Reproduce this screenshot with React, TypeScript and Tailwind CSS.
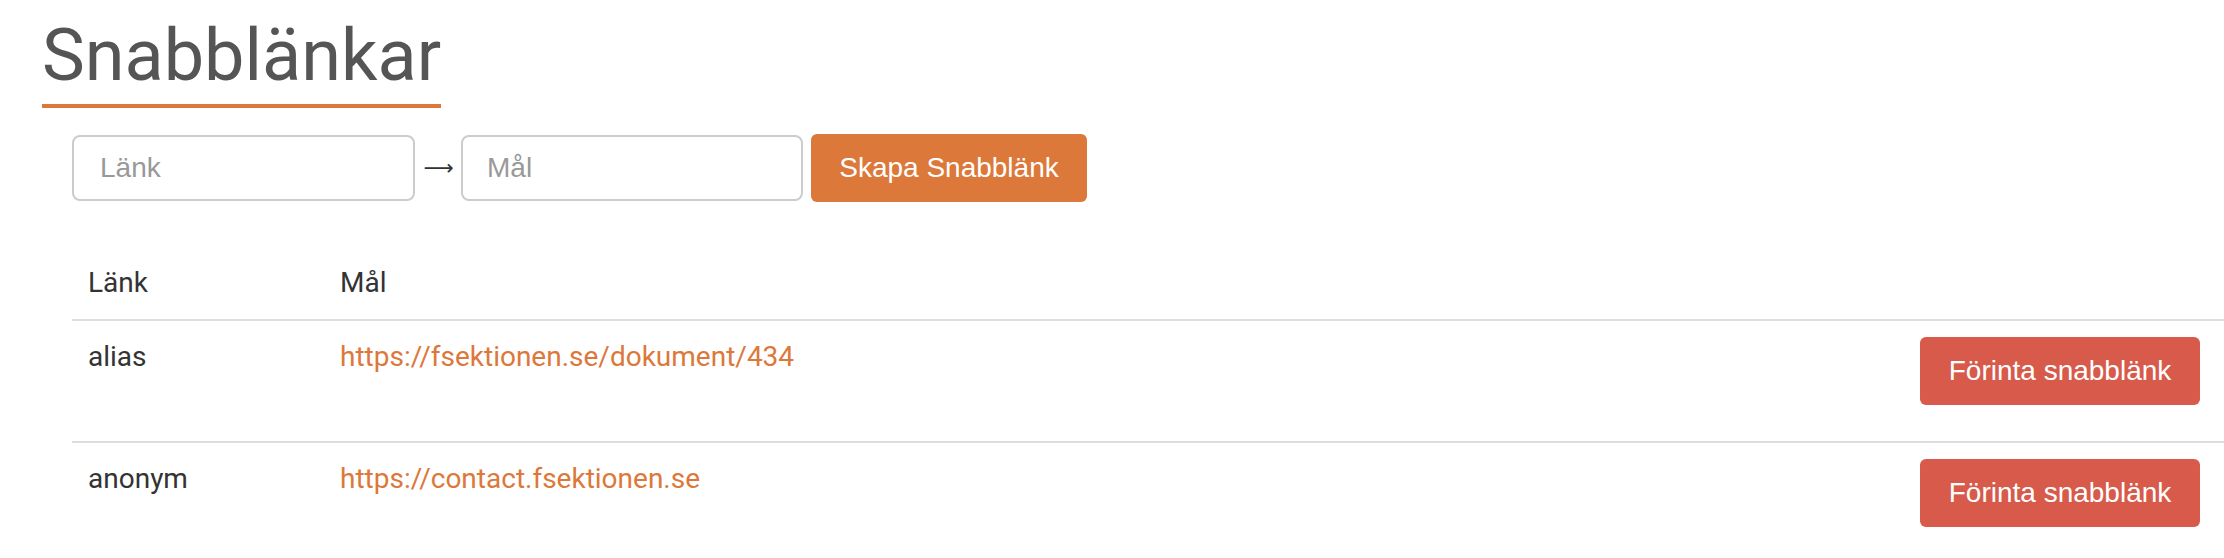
import React from "react";

const roboto = { fontFamily: "Roboto, 'Liberation Sans', sans-serif" };

export default function App() {
  const rows = [
    { alias: "alias", target: "https://fsektionen.se/dokument/434" },
    { alias: "anonym", target: "https://contact.fsektionen.se" },
  ];
  return (
    <div className="pl-[42px] pt-[16px] bg-white min-h-[558px] overflow-hidden">
      <h1
        className="inline-block text-[72px] leading-[79px] font-normal text-[#555555] pb-[9px] border-b-4 border-[#dc783a] font-['Roboto',sans-serif]"
      >
        Snabblänkar
      </h1>
      <div className="ml-[30px] mt-[26px] flex items-center font-['Liberation_Sans',Arial,sans-serif]">
        <input
          placeholder="Länk"
          className="w-[343px] h-[66px] border-2 border-[#cccccc] rounded-[8px] px-[26px] text-[28px] text-[#555] placeholder:text-[#999999] outline-none"
        />
        <span className="ml-[10px] mr-[9px] w-[27px] flex justify-center overflow-visible text-[21px] text-[#333] leading-none whitespace-nowrap font-['DejaVu_Sans',sans-serif]">
          ⟶
        </span>
        <input
          placeholder="Mål"
          className="w-[342px] h-[66px] border-2 border-[#cccccc] rounded-[8px] px-[24px] text-[28px] text-[#555] placeholder:text-[#999999] outline-none"
        />
        <button className="ml-[8px] h-[68px] w-[276px] bg-[#dc783a] rounded-[6px] text-white text-[28px] leading-[40px]">
          Skapa Snabblänk
        </button>
      </div>
      <div className="ml-[30px] mt-[45px]">
        <table className="w-full border-collapse text-[28px] leading-[40px] text-[#333333]" style={roboto}>
          <thead>
            <tr className="border-b-2 border-[#dddddd]">
              <th className="w-[252px] text-left font-normal px-[16px] py-[16px] align-top">Länk</th>
              <th className="text-left font-normal px-[16px] py-[16px] align-top">Mål</th>
              <th className="px-[16px] py-[16px]"></th>
            </tr>
          </thead>
          <tbody>
            {rows.map((r) => (
              <tr key={r.alias} className="border-b-2 border-[#dddddd] last:border-b-0">
                <td className="px-[16px] pt-[16px] align-top">{r.alias}</td>
                <td className="px-[16px] pt-[16px] align-top">
                  <a href="#" className="text-[#dc783a]">{r.target}</a>
                </td>
                <td className="pl-[16px] pr-[24px] pt-[16px] pb-[36px] align-top text-right">
                  <button className="h-[68px] w-[280px] bg-[#d75a4a] rounded-[6px] text-white text-[28px] leading-[40px] font-['Liberation_Sans',Arial,sans-serif]">
                    Förinta snabblänk
                  </button>
                </td>
              </tr>
            ))}
          </tbody>
        </table>
      </div>
    </div>
  );
}
